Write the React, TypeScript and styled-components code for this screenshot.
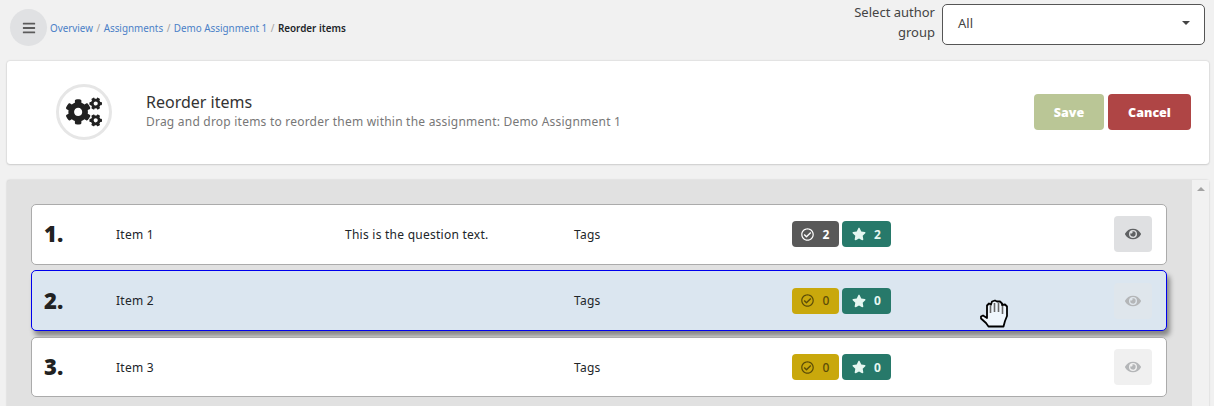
import React from "react";
import styled, { createGlobalStyle } from "styled-components";
import { FaBars, FaCogs, FaEye, FaRegCheckCircle, FaStar } from "react-icons/fa";

const Global = createGlobalStyle`
  html, body { margin: 0; padding: 0; background: #f1f1f1; overflow: hidden; height: 406px; }
  body { font-family: "Noto Sans", "Open Sans", sans-serif; color: #212529; }
`;
const Page = styled.div`
  width: 1214px; height: 406px; position: relative; overflow: hidden;
  padding: 0 5px 0 6px; box-sizing: border-box;
`;
const TopBar = styled.header`
  height: 61px; display: flex; align-items: flex-start; justify-content: space-between; padding-right: 4px;
`;
const Left = styled.div`
  display: flex; align-items: center; gap: 3px; margin: 9px 0 0 4px;
`;
const MenuButton = styled.button`
  width: 37px; height: 37px; border: 0; border-radius: 50%; background: #e0e1e3; color: #5b5b5b;
  display: flex; align-items: center; justify-content: center; padding: 0; font-size: 14px;
`;
const Crumbs = styled.nav`
  font-size: 9.85px; display: flex; gap: 3.5px; color: #a0a0a0; white-space: nowrap;
`;
const Crumb = styled.a`color: #4a7fc7;`;
const Current = styled.span`color: #212529; font-weight: 600;`;
const AuthorGroup = styled.div`
  display: flex; align-items: flex-start; gap: 7px; margin-top: 4px;
`;
const SelectLabel = styled.label`
  width: 88px; text-align: right; font-size: 13px; line-height: 20px; color: #444; margin-top: -2px;
`;
const Select = styled.div`
  width: 263px; height: 41px; box-sizing: border-box; background: #fff; border: 1px solid #555; border-radius: 5px;
  display: flex; align-items: center; justify-content: space-between; padding: 0 14px 3px 15px;
  font-size: 13px; color: #444;
`;
const Caret = styled.span`
  width: 0; height: 0; border-left: 4px solid transparent; border-right: 4px solid transparent; border-top: 4px solid #444;
`;
const Card = styled.section`
  height: 103px; margin-left: 1px; box-sizing: border-box; background: #fff; border-radius: 3px;
  box-shadow: 0 0 2px rgba(0,0,0,.2), 0 1px 2px rgba(0,0,0,.1);
  display: flex; align-items: center; padding: 0 18px 1px 49px;
`;
const IconRing = styled.div`
  width: 56px; height: 56px; border: 3px solid #e6e6e6; border-radius: 50%; display: flex; align-items: center; justify-content: center;
  font-size: 36px; color: #212121; flex: none; margin-right: 34px; box-sizing: border-box;
`;
const TitleBlock = styled.div`flex: 1; padding-bottom: 1px;`;
const Title = styled.h1`margin: 0 0 1px; font-size: 16px; font-weight: 400; line-height: 19px; color: #333;`;
const Sub = styled.p`margin: 0; font-size: 12px; letter-spacing: .22px; line-height: 18px; color: #777;`;
const Actions = styled.div`display: flex; gap: 4px;`;
const ActionButton = styled.button<{ $bg: string; $w: number }>`
  width: ${p => p.$w}px; height: 36px; border: 0; border-radius: 4px; background: ${p => p.$bg}; color: #fff;
  font: 900 12.5px "Noto Sans", sans-serif; padding: 0;
`;
const Panel = styled.section`
  margin: 16px 0 0 1px; height: 240px; display: flex; background: #e1e1e1; border-radius: 3px 3px 0 0;
  box-shadow: 0 0 2px rgba(0,0,0,.2);
`;
const List = styled.div`
  flex: 1; padding: 24px 25px 0 24px; display: flex; flex-direction: column; min-width: 0;
`;
const Scrollbar = styled.div`
  width: 17px; background: #f1f1f1; display: flex; justify-content: center; padding-top: 7px; box-sizing: border-box;
`;
const ScrollArrow = styled.span`
  width: 0; height: 0; border-left: 4px solid transparent; border-right: 4px solid transparent; border-bottom: 4px solid #a3a3a3;
`;
const Row = styled.div<{ $active?: boolean; $top: number; $h: number; $lift?: boolean }>`
  height: ${p => p.$h}px; margin-top: ${p => p.$top}px; box-sizing: border-box; border-radius: 5px; display: grid;
  grid-template-columns: 72px 229px 229px 218px 1fr 38px; align-items: center;
  padding: 0 14px ${p => p.$lift ? 1 : 0}px 12px;
  background: ${p => p.$active ? "#dbe6f0" : "#fff"};
  border: 1px solid ${p => p.$active ? "#0000ee" : "#ababab"};
  font-size: 12px; letter-spacing: .25px; color: #212529;
  box-shadow: ${p => p.$active ? "3px 5px 5px rgba(0,0,0,.4)" : "none"};
`;
const Num = styled.div`font-size: 22px; font-weight: 900; letter-spacing: 0; color: #222; line-height: 1; margin-top: -2px;`;
const Badges = styled.div`display: flex; gap: 3px;`;
const Badge = styled.span<{ $bg: string; $fg: string; $w: number; $weight: number; $icon: number }>`
  width: ${p => p.$w}px; height: 26px; background: ${p => p.$bg}; color: ${p => p.$fg}; border-radius: 4px;
  display: flex; align-items: center; justify-content: center; gap: 8px; font-size: 12px; font-weight: ${p => p.$weight};
  svg { font-size: ${p => p.$icon}px; }
`;
const EyeButton = styled.button<{ $dim?: boolean; $bg: string }>`
  width: 38px; height: 36px; border: 0; border-radius: 4px; background: ${p => p.$bg}; padding: 0;
  display: flex; align-items: center; justify-content: center; font-size: 16px;
  color: ${p => p.$dim ? "#b4b6b8" : "#5f6163"};
`;
const Hand = styled.svg`position: absolute; left: 975px; top: 295px; width: 36px; height: 36px;`;

function HandCursor() {
  return (
    <Hand viewBox="0 0 36 36">
      <path
        d="M13.5 31.5 L11 28 L6 23.5 L6 21.5 L8 20.5 L12 23 L12 10.5 L14 8.5 L16 9.5 L17 6.5 L20 5.5 L22 6.5 L25 6.5 L27 8.5 L27 10 L30 9.5 L32 11.5 L32 21 L30 26 L28.5 31.5 Z"
        fill="#eff6fc" stroke="#000" strokeWidth="1.8" strokeLinejoin="round"
      />
      <path d="M15.5 10v8M19.5 8v9M23.5 8v9M27.5 11v8" stroke="#666" strokeWidth="1.6" fill="none" />
    </Hand>
  );
}

const rows = [
  { n: "1.", name: "Item 1", q: "This is the question text.", a: 2, s: 2, top: 0, h: 61, dark: true, eye: "#dfe0e2", dim: false, lift: true },
  { n: "2.", name: "Item 2", q: "", a: 0, s: 0, top: 5, h: 61, dark: false, eye: "#dfe6ec", dim: true, active: true },
  { n: "3.", name: "Item 3", q: "", a: 0, s: 0, top: 6, h: 60, dark: false, eye: "#f0f0f0", dim: true },
];

export default function App() {
  return (
    <Page>
      <Global />
      <TopBar>
        <Left>
          <MenuButton aria-label="Menu"><FaBars /></MenuButton>
          <Crumbs>
            <Crumb>Overview</Crumb>/<Crumb>Assignments</Crumb>/<Crumb>Demo Assignment 1</Crumb>/<Current>Reorder items</Current>
          </Crumbs>
        </Left>
        <AuthorGroup>
          <SelectLabel>Select author group</SelectLabel>
          <Select>All<Caret /></Select>
        </AuthorGroup>
      </TopBar>
      <Card>
        <IconRing><FaCogs /></IconRing>
        <TitleBlock>
          <Title>Reorder items</Title>
          <Sub>Drag and drop items to reorder them within the assignment: Demo Assignment 1</Sub>
        </TitleBlock>
        <Actions>
          <ActionButton $bg="#bac696" $w={70}>Save</ActionButton>
          <ActionButton $bg="#af4545" $w={83}>Cancel</ActionButton>
        </Actions>
      </Card>
      <Panel>
        <List>
          {rows.map(r => (
            <Row key={r.n} $active={r.active} $top={r.top} $h={r.h} $lift={r.lift}>
              <Num>{r.n}</Num>
              <div>{r.name}</div>
              <div>{r.q}</div>
              <div>Tags</div>
              <Badges>
                <Badge $bg={r.dark ? "#595959" : "#c9a80c"} $fg={r.dark ? "#fff" : "#5b4c08"} $w={47} $icon={13} $weight={r.dark ? 700 : 500}>
                  <FaRegCheckCircle />{r.a}
                </Badge>
                <Badge $bg="#27796a" $fg="#e6f7f1" $w={49} $icon={14} $weight={700}>
                  <FaStar />{r.s}
                </Badge>
              </Badges>
              <EyeButton $bg={r.eye} $dim={r.dim} aria-label="View"><FaEye /></EyeButton>
            </Row>
          ))}
        </List>
        <Scrollbar><ScrollArrow /></Scrollbar>
      </Panel>
      <HandCursor />
    </Page>
  );
}
